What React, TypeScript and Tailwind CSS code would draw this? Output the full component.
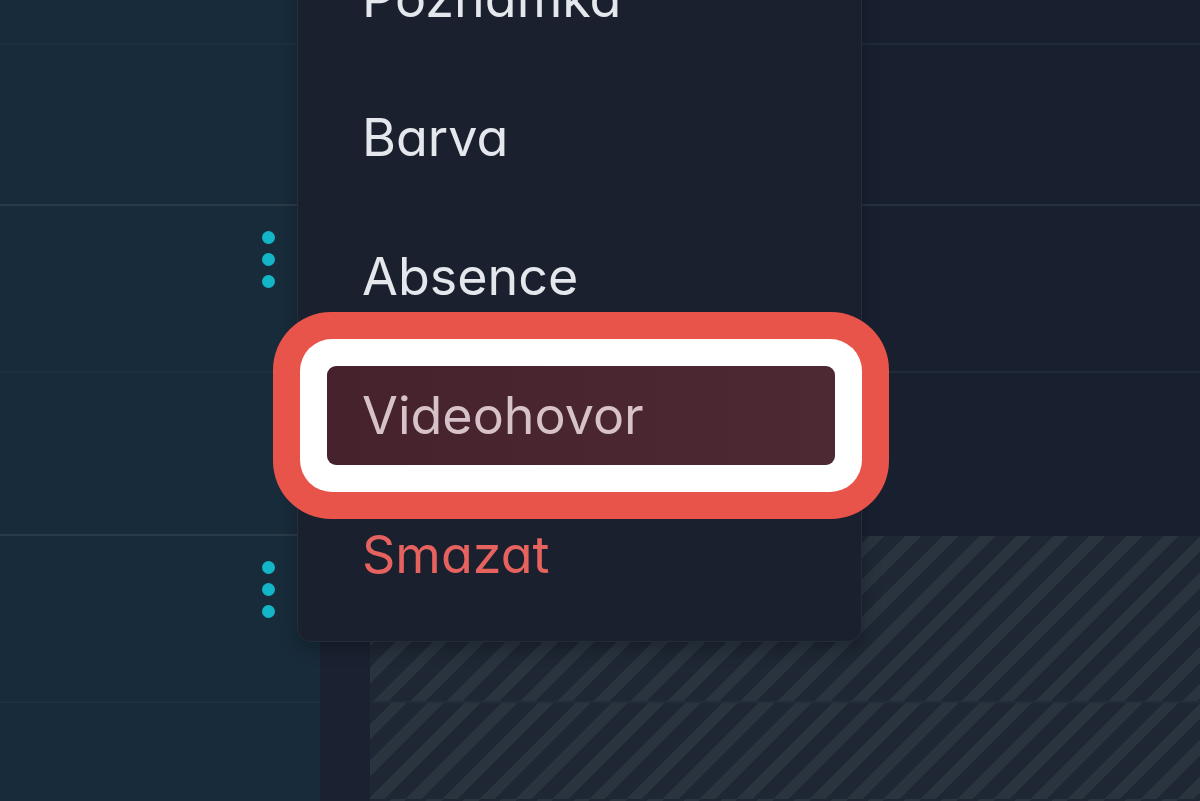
const rows = [
  { h: "h-[45px]", left: "border-[#1d3241]", right: "border-[#202a38] bg-[#182030]", dots: false, hatch: false },
  { h: "h-[161px]", left: "border-[#293a48]", right: "border-[#263140] bg-[#182030]", dots: false, hatch: false },
  { h: "h-[167px]", left: "border-[#1d3241]", right: "border-[#202a38] bg-[#182030]", dots: true, hatch: false },
  { h: "h-[163px]", left: "border-[#293a48]", right: "border-transparent bg-[#182030]", dots: false, hatch: false },
  { h: "h-[167px]", left: "border-[#1d3241]", right: "border-[#232d39]", dots: true, hatch: true },
  { h: "h-[98px]", left: "border-transparent", right: "border-transparent", dots: false, hatch: true },
];

const hatch =
  "bg-[repeating-linear-gradient(135deg,#1e2733_0px,#1e2733_15px,#29343f_15px,#29343f_26px)]";

function Dots() {
  return (
    <div className="flex flex-col items-center gap-[9px]">
      <span className="h-[13px] w-[13px] rounded-full bg-[#13b6c6]" />
      <span className="h-[13px] w-[13px] rounded-full bg-[#13b6c6]" />
      <span className="h-[13px] w-[13px] rounded-full bg-[#13b6c6]" />
    </div>
  );
}

const items = [
  { label: "Poznámka", tone: "normal" },
  { label: "Barva", tone: "normal" },
  { label: "Absence", tone: "normal" },
  { label: "Videohovor", tone: "active" },
  { label: "Smazat", tone: "danger" },
];

function ContextMenu() {
  return (
    <div className="absolute left-[297px] top-[-88px] h-[730px] w-[565px] rounded-[14px] border border-[#252d3b] bg-[#1a202e] pl-[29px] pt-[36px] shadow-[0_6px_18px_rgba(0,0,0,0.25)]">
      <ul className="flex flex-col gap-[40px]">
        {items.map((item) =>
          item.tone === "active" ? (
            <li key={item.label} className="relative z-10 h-[99px] w-[508px]">
              {/* annotation ring drawn over the menu */}
              <span className="absolute -inset-[54px] rounded-[58px] bg-[#e8534a]" />
              <span className="absolute -inset-[27px] rounded-[32px] bg-white" />
              <div className="relative flex h-full items-center rounded-[9px] bg-[linear-gradient(90deg,#45222c,#4d2a33)] pl-[35px] text-[#d6c2c8]">
                {item.label}
              </div>
            </li>
          ) : (
            <li
              key={item.label}
              className={`flex h-[99px] w-[508px] items-center pl-[35px] ${
                item.tone === "danger" ? "text-[#e5625e]" : "text-[#e4e7ec]"
              }`}
            >
              {item.label}
            </li>
          ),
        )}
      </ul>
    </div>
  );
}

export default function App() {
  return (
    <div className="relative h-[801px] w-[1200px] overflow-hidden bg-[#182030] font-['Inter','Liberation_Sans',sans-serif] text-[52px] leading-none [font-feature-settings:'cv11']">
      <div className="flex h-full flex-col">
        {rows.map((row, i) => (
          <div key={i} className={`flex shrink-0 ${row.h}`}>
            <div className={`flex w-[320px] shrink-0 justify-end border-b-2 bg-[#182b3a] pr-[45px] pt-[25px] ${row.left}`}>
              {row.dots ? <Dots /> : null}
            </div>
            <div className="w-[50px] shrink-0 bg-[#1a2130]" />
            <div className={`flex-1 border-b-2 ${row.right} ${row.hatch ? hatch : ""}`} />
          </div>
        ))}
      </div>
      <ContextMenu />
    </div>
  );
}
